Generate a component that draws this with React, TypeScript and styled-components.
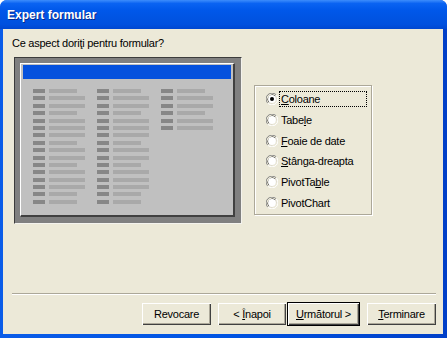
import React from 'react';
import styled, { createGlobalStyle } from 'styled-components';

const GlobalStyle = createGlobalStyle`
  html, body {
    margin: 0;
    padding: 0;
    background: #fff;
  }
  * {
    box-sizing: border-box;
  }
`;

const Window = styled.div`
  width: 447px;
  height: 338px;
  display: flex;
  flex-direction: column;
  background: linear-gradient(to right, #0a5ce8 0%, #0054e3 50%, #003fc8 100%);
  border-radius: 7px 7px 0 0;
  overflow: hidden;
  font-family: 'Liberation Sans', Arial, sans-serif;
`;

const TitleBar = styled.div`
  height: 29px;
  flex: none;
  display: flex;
  align-items: center;
  padding: 1px 0 0 7px;
  background: linear-gradient(
    to bottom,
    #3d8dfc 0%,
    #0a63f2 12%,
    #0058ea 35%,
    #0054e3 60%,
    #0050de 85%,
    #0047d0 100%
  );
  color: #fff;
  font: bold 12px 'Liberation Sans', Arial, sans-serif;
  text-shadow: 1px 1px 0 #0a2a8a;
`;

const Body = styled.div`
  flex: 1;
  margin: 0 4px 4px 3px;
  background: #ece9d8;
  display: flex;
  flex-direction: column;
  color: #000;
  font-size: 11px;
  letter-spacing: -0.25px;
`;

const Prompt = styled.div`
  margin: 7px 0 0 9px;
  line-height: 14px;
`;

const MainRow = styled.div`
  display: flex;
  align-items: flex-start;
  margin: 7px 0 0 11px;
`;

const PreviewFrame = styled.div`
  width: 228px;
  height: 167px;
  padding: 5px 6px 6px 5px;
  background: #808080;
  border-top: 1px solid #3c3c3c;
  border-left: 1px solid #3c3c3c;
  border-right: 1px solid #f4f3ee;
  border-bottom: 1px solid #f4f3ee;
`;

const PreviewSheet = styled.div`
  width: 215px;
  height: 154px;
  padding: 1px;
  background: #c0c0c0;
  border-top: 1px solid #fff;
  border-left: 1px solid #fff;
  border-right: 2px solid #404040;
  border-bottom: 2px solid #404040;
  display: flex;
  flex-direction: column;
`;

const PreviewHeader = styled.div`
  height: 14px;
  margin: 0 1px;
  background: #0551dd;
  flex: none;
`;

const Columns = styled.div`
  display: flex;
  gap: 12px;
  padding: 10px 0 0 11px;
`;

const FieldColumn = styled.div`
  width: 52px;
  display: grid;
  grid-auto-rows: 4px;
  row-gap: 3.4px;
`;

const FieldRow = styled.div`
  display: flex;
  gap: 4px;
`;

const FieldLabel = styled.div`
  width: 12px;
  background: #878787;
`;

const FieldBox = styled.div<{ $long: boolean }>`
  width: ${(p) => (p.$long ? 36 : 28)}px;
  background: #a9a9a9;
`;

const GroupBox = styled.div`
  margin: 28px 0 0 12px;
  width: 118px;
  height: 130px;
  border: 1px solid #aca899;
  box-shadow: inset 1px 1px 0 #fff, 1px 1px 0 #fff;
  padding: 5px 0 0 11px;
  display: flex;
  flex-direction: column;
  gap: 4.8px;
`;

const Option = styled.div`
  display: flex;
  align-items: center;
  height: 16px;
`;

const OptionLabel = styled.span<{ $focused?: boolean }>`
  width: 88px;
  height: 16px;
  padding: 0 1px;
  line-height: 14px;
  border: 1px dotted ${(p) => (p.$focused ? '#000' : 'transparent')};
  white-space: nowrap;
`;

const Key = styled.span`
  text-decoration: underline;
`;

const Spacer = styled.div`
  flex: 1;
`;

const Separator = styled.div`
  height: 2px;
  margin: 0 7px 0 9px;
  border-top: 1px solid #aca899;
  border-bottom: 1px solid #fff;
`;

const ButtonRow = styled.div`
  display: flex;
  justify-content: flex-end;
  align-items: center;
  padding: 7px 6px 8px 0;
`;

const Button = styled.div<{ $width: number; $default?: boolean; $gap?: number }>`
  width: ${(p) => p.$width}px;
  height: 24px;
  margin-left: ${(p) => p.$gap ?? 0}px;
  line-height: 22px;
  text-align: center;
  background: #ece9d8;
  border: 1px solid ${(p) => (p.$default ? '#000' : 'transparent')};
  box-shadow: inset 1px 1px 0 #fff, inset -1px -1px 0 #404040, inset -2px -2px 0 #aca899;
  white-space: nowrap;
`;

const RadioMark: React.FC<{ checked?: boolean }> = ({ checked }) => (
  <svg width="12" height="12" viewBox="0 0 12 12" style={{ flex: 'none', marginRight: 1 }}>
    <path d="M10.2 1.8 A5.8 5.8 0 0 0 1.8 10.2" fill="none" stroke="#808080" strokeWidth="1" />
    <path d="M1.8 10.2 A5.8 5.8 0 0 0 10.2 1.8" fill="none" stroke="#fff" strokeWidth="1" />
    <path d="M9.2 2.8 A4.6 4.6 0 0 0 2.8 9.2" fill="none" stroke="#303030" strokeWidth="1" />
    <path d="M2.8 9.2 A4.6 4.6 0 0 0 9.2 2.8" fill="none" stroke="#d4d0c8" strokeWidth="1" />
    <circle cx="6" cy="6" r="3.9" fill="#fff" />
    {checked && <circle cx="6" cy="6" r="2" fill="#000" />}
  </svg>
);

const layout: boolean[] = [
  false, true, true, false, true, true, true, false,
  true, true, false, true, true, true, false, false,
];

const columns = [layout, layout, layout.slice(0, 6)];

const App: React.FC = () => (
  <>
    <GlobalStyle />
    <Window>
      <TitleBar>Expert formular</TitleBar>
      <Body>
        <Prompt>Ce aspect doriţi pentru formular?</Prompt>
        <MainRow>
          <PreviewFrame>
            <PreviewSheet>
              <PreviewHeader />
              <Columns>
                {columns.map((rows, c) => (
                  <FieldColumn key={c}>
                    {rows.map((long, r) => (
                      <FieldRow key={r}>
                        <FieldLabel />
                        <FieldBox $long={long} />
                      </FieldRow>
                    ))}
                  </FieldColumn>
                ))}
              </Columns>
            </PreviewSheet>
          </PreviewFrame>
          <GroupBox>
            <Option>
              <RadioMark checked />
              <OptionLabel $focused>
                <Key>C</Key>oloane
              </OptionLabel>
            </Option>
            <Option>
              <RadioMark />
              <OptionLabel>
                Tabe<Key>l</Key>e
              </OptionLabel>
            </Option>
            <Option>
              <RadioMark />
              <OptionLabel>
                <Key>F</Key>oaie de date
              </OptionLabel>
            </Option>
            <Option>
              <RadioMark />
              <OptionLabel>
                <Key>S</Key>tânga-dreapta
              </OptionLabel>
            </Option>
            <Option>
              <RadioMark />
              <OptionLabel>
                PivotTa<Key>b</Key>le
              </OptionLabel>
            </Option>
            <Option>
              <RadioMark />
              <OptionLabel>PivotChart</OptionLabel>
            </Option>
          </GroupBox>
        </MainRow>
        <Spacer />
        <Separator />
        <ButtonRow>
          <Button $width={71}>Revocare</Button>
          <Button $width={70} $gap={5}>
            &lt; <Key>Î</Key>napoi
          </Button>
          <Button $width={73} $default>
            <Key>U</Key>rmătorul &gt;
          </Button>
          <Button $width={71} $gap={6}>
            <Key>T</Key>erminare
          </Button>
        </ButtonRow>
      </Body>
    </Window>
  </>
);

export default App;
